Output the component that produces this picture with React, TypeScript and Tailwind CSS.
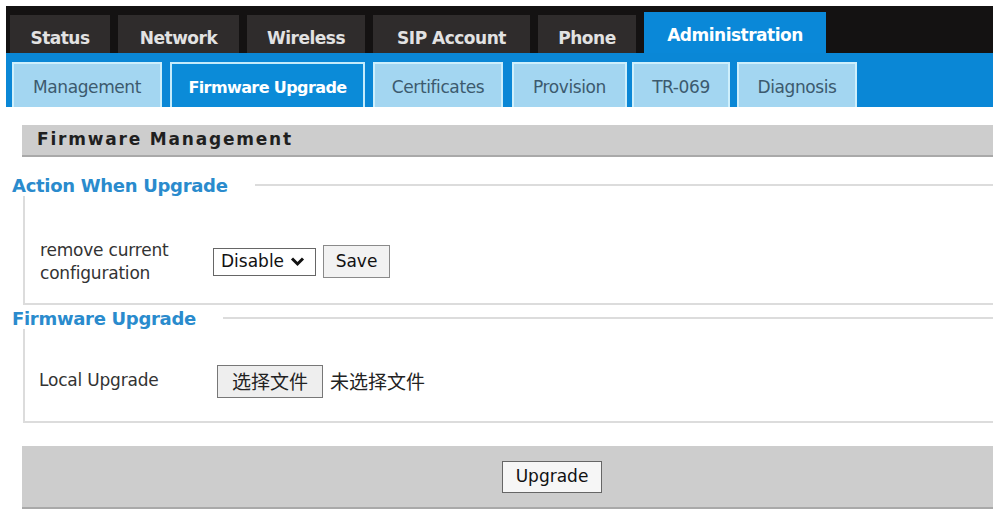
import React from "react";

const topTabs = [
  { label: "Status", w: "w-[100px]" },
  { label: "Network", w: "w-[121px]" },
  { label: "Wireless", w: "w-[118px]" },
  { label: "SIP Account", w: "w-[157px]" },
  { label: "Phone", w: "w-[98px]" },
];

const subTabs = [
  { label: "Management", cls: "w-[150px]" },
  { label: "Firmware Upgrade", cls: "w-[195px] ml-[8px]", active: true },
  { label: "Certificates", cls: "w-[130px] ml-[8px]" },
  { label: "Provision", cls: "w-[115px] ml-[9px]" },
  { label: "TR-069", cls: "w-[98px] ml-[5px]" },
  { label: "Diagnosis", cls: "w-[120px] ml-[7px]" },
];

function Legend({ title }: { title: string }) {
  return (
    <div className="flex items-center h-[22px]">
      <span className="text-[18px] font-bold text-[#2a8bcd] tracking-[-0.3px] whitespace-nowrap">{title}</span>
      <div className="flex-1 h-[2px] bg-[#dcdcdc] ml-[27px]" />
    </div>
  );
}

export default function App() {
  return (
    <div className="w-[998px] h-[514px] bg-white pt-[6px] pl-[6px] pr-[5px] font-['DejaVu_Sans',sans-serif] overflow-hidden">
      {/* top nav */}
      <div className="flex items-end gap-[8px] h-[47px] bg-[#141212] pl-[4px]">
        {topTabs.map((t) => (
          <div
            key={t.label}
            className={`${t.w} h-[38px] bg-[#2f2c2c] flex items-center justify-center pt-[10px] text-[17px] font-bold text-[#e2e2e2] tracking-[-0.5px]`}
          >
            {t.label}
          </div>
        ))}
        <div className="w-[182px] h-[41px] bg-[#0a88d8] flex items-center justify-center pt-[6px] text-[17px] font-bold text-white tracking-[-0.5px]">
          Administration
        </div>
      </div>
      {/* sub nav */}
      <div className="flex items-end h-[54px] bg-[#0a87d6] pl-[6px]">
        {subTabs.map((t) =>
          t.active ? (
            <div
              key={t.label}
              className={`${t.cls} h-[45px] bg-[#0b8bd8] border-2 border-b-0 border-[#c4ebfb] flex items-center justify-center pt-[4px] text-[16px] font-bold text-white tracking-[-0.6px]`}
            >
              {t.label}
            </div>
          ) : (
            <div
              key={t.label}
              className={`${t.cls} h-[45px] bg-[#a3d6f1] border-2 border-b-0 border-[#cdeffc] flex items-center justify-center pt-[4px] text-[17px] text-[#3c5a6e] tracking-[-0.4px]`}
            >
              {t.label}
            </div>
          )
        )}
      </div>

      {/* content */}
      <div className="pt-[18px]">
        <div className="ml-[16px] h-[32px] bg-[#cdcdcd] border-b-2 border-[#a9a9a9] flex items-center pl-[15px] text-[17px] font-bold text-[#1f1f1f] tracking-[1.8px]">
          Firmware Management
        </div>

        {/* Action When Upgrade */}
        <div className="mt-[17px] pl-[6px]">
          <Legend title="Action When Upgrade" />
        </div>
        <div className="ml-[17px] h-[109px] border-l-2 border-b-2 border-[#dcdcdc] flex items-center pl-[15px] pt-[24px]">
          <div className="w-[173px] text-[17px] leading-[23px] text-[#333] tracking-[-0.2px]">
            remove current
            <br />
            configuration
          </div>
          <div className="w-[103px] h-[28px] border border-[#666] bg-white flex items-center pl-[7px] text-[17px] text-[#111]">
            Disable
            <svg className="ml-[6px]" width="15" height="11" viewBox="0 0 15 11">
              <path d="M2 2.5 L7.5 8 L13 2.5" stroke="#111" strokeWidth="3" fill="none" />
            </svg>
          </div>
          <div className="ml-[7px] w-[67px] h-[33px] border border-[#8a8a8a] bg-[#f2f2f2] flex items-center justify-center text-[17px] text-[#111]">
            Save
          </div>
        </div>

        {/* Firmware Upgrade */}
        <div className="mt-[2px] pl-[6px]">
          <Legend title="Firmware Upgrade" />
        </div>
        <div className="ml-[17px] h-[94px] border-l-2 border-b-2 border-[#dcdcdc] flex items-center pl-[14px] pt-[12px]">
          <div className="w-[178px] text-[17px] text-[#333] tracking-[-0.2px]">Local Upgrade</div>
          <div className="w-[106px] h-[33px] border border-[#777] bg-[#eeeeee] flex items-center justify-center text-[19px] text-[#222] font-['Noto_Sans_CJK_SC',sans-serif]">
            选择文件
          </div>
          <div className="ml-[7px] text-[19px] text-[#222] font-['Noto_Sans_CJK_SC',sans-serif]">未选择文件</div>
        </div>

        {/* Upgrade bar */}
        <div className="mt-[23px] ml-[16px] h-[63px] bg-[#cdcdcd] border-b-2 border-[#a9a9a9] flex items-center pl-[480px]">
          <div className="w-[100px] h-[32px] border border-[#666] bg-[#f6f6f6] flex items-center justify-center text-[17px] text-[#111]">
            Upgrade
          </div>
        </div>
      </div>
    </div>
  );
}
